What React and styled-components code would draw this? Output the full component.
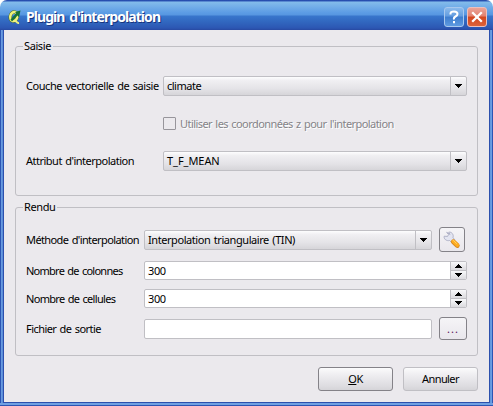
import React from 'react';
import styled, { createGlobalStyle, css } from 'styled-components';

const GlobalStyle = createGlobalStyle`
  * { box-sizing: border-box; }
  body { margin: 0; background: #fff; overflow: hidden; }
`;

const Window = styled.div`
  width: 493px;
  height: 406px;
  display: flex;
  flex-direction: column;
  padding: 0 4px 4px;
  border-radius: 7px 7px 0 0;
  background:
    linear-gradient(#2c50ad, #2c50ad) 3px 30px / 1px 373px no-repeat,
    linear-gradient(#2c50ad, #2c50ad) 489px 30px / 1px 373px no-repeat,
    linear-gradient(#2c50ad, #2c50ad) 3px 402px / 487px 1px no-repeat,
    linear-gradient(90deg, #2c55b4 1px, #6fa0e2 1px, #5587d5 3px, transparent 3px, transparent 490px, #5f95dd 490px, #6fa0e2 492px, #2c55b4 492px) 0 30px / 493px 373px no-repeat,
    linear-gradient(#6fa0e2 0 2px, #2c55b4 2px) 0 403px / 493px 3px no-repeat,
    linear-gradient(#1f45a5 0, #2f58b8 1px, #83bcea 2px, #79b3e9 5px, #5b9be4 13px, #5796e0 15px, #3876cc 16px, #336cc3 20px, #2c57b3 28px, #2849a2 30px);
  font-family: 'Noto Sans', 'Open Sans', sans-serif;
  font-size: 11px;
  line-height: 14px;
  color: #000;
`;

const TitleBar = styled.header`
  height: 30px;
  flex: none;
  display: flex;
  align-items: center;
  padding: 4px 2px 0 4px;
`;

const Title = styled.h1`
  flex: 1;
  margin: 0 0 0 4px;
  font-size: 14px;
  line-height: 18px;
  font-weight: 700;
  letter-spacing: -0.93px;
  word-spacing: 2px;
  color: #fff;
  text-shadow: 1px 1px 0 #17357f;
  white-space: nowrap;
`;

const CaptionButton = styled.button`
  width: 20px;
  height: 20px;
  padding: 0;
  margin-left: 3px;
  display: grid;
  place-items: center;
  border: 1px solid ${p => (p.$danger ? '#ecc0bd' : '#a8c8ee')};
  border-radius: 3px;
  background: ${p => p.$danger
    ? 'linear-gradient(#eba397, #e28270 45%, #d3471f 50%, #dc6239)'
    : 'linear-gradient(#8ab9eb, #639de0 45%, #3e7dce 50%, #5e9ae0)'};
`;

const Body = styled.main`
  flex: 1;
  background: #ebe9ed;
  padding: 16px 11px 0;
`;

const Group = styled.section`
  position: relative;
  height: ${p => p.$height}px;
  margin-bottom: 11px;
  border: 1px solid #c0bfc4;
  border-radius: 3px;
  padding: ${p => p.$top}px 10px 0;
`;

const Legend = styled.h2`
  position: absolute;
  left: 7px;
  top: -8px;
  margin: 0;
  padding: 0 2px 0 1px;
  background: #ebe9ed;
  font-size: 11px;
  line-height: 14px;
  font-weight: 400;
  letter-spacing: ${p => p.$track ?? -0.4}px;
`;

const Row = styled.div`
  display: flex;
  align-items: center;
  height: ${p => p.$height}px;
  margin-bottom: ${p => p.$gap || 0}px;
`;

const Label = styled.label`
  width: ${p => p.$width}px;
  flex: none;
  white-space: nowrap;
  letter-spacing: ${p => p.$track ?? -0.5}px;
  word-spacing: 1px;
`;

const Value = styled.span`
  flex: 1;
  padding-left: 3px;
  white-space: nowrap;
  letter-spacing: ${p => p.$track ?? -0.43}px;
  word-spacing: 1px;
`;

const field = css`
  display: flex;
  align-items: stretch;
  width: ${p => p.$width}px;
  border: 1px solid #c0bfc4;
  border-radius: 2px;
  overflow: hidden;
`;

const Combo = styled.div`
  ${field}
  height: 20px;
  line-height: 18px;
  background: linear-gradient(#fdfdfe, #f0eff2 20%, #e4e3e7 65%, #d6d5d9);
`;

const ComboArrow = styled.span`
  width: 16px;
  border-left: 1px solid #c0bfc4;
  display: grid;
  place-items: center;
`;

const TextBox = styled.div`
  ${field}
  height: ${p => p.$height || 19}px;
  line-height: 17px;
  background: #fff;
`;

const Stepper = styled.div`
  width: 16px;
  display: grid;
  grid-template-rows: 8px 9px;
  border-left: 1px solid #c0bfc4;
`;

const Step = styled.span`
  display: grid;
  place-items: center;
  background: linear-gradient(#f8f8fa, #dcdbdf);
  & + & { border-top: 1px solid #c0bfc4; }
`;

const CheckBox = styled.span`
  width: 13px;
  height: 13px;
  margin-right: 4px;
  border: 1px solid #97959b;
  border-radius: 1px;
`;

const Disabled = styled(Label)`
  color: #858488;
  text-shadow: 1px 1px 0 #fff;
`;

const Button = styled.button`
  width: ${p => p.$width}px;
  height: ${p => p.$height}px;
  flex: none;
  margin: 0 0 0 ${p => p.$left || 0}px;
  padding: 0;
  display: flex;
  align-items: center;
  justify-content: center;
  border: 1px solid ${p => (p.$strong ? '#848288' : '#c0bfc4')};
  border-radius: 3px;
  background: ${p => p.$flat
    ? 'linear-gradient(#f5f4f7, #e9e7ec)'
    : 'linear-gradient(#fbfbfc, #efeef1 30%, #dedde1 80%, #d5d4d8)'};
  font: inherit;
  color: ${p => p.$ink || '#000'};
  letter-spacing: ${p => p.$track || 0}px;
`;

const Footer = styled.footer`
  display: flex;
  justify-content: flex-end;
`;

function Triangle({ up }) {
  return (
    <svg width="7" height="4" viewBox="0 0 7 4" shapeRendering="crispEdges">
      <path d={up ? 'M3 0h1v1h1v1h1v1h1v1H0V3h1V2h1V1h1z' : 'M0 0h7v1H6v1H5v1H4v1H3V3H2V2H1V1H0z'} />
    </svg>
  );
}

function QgisLogo() {
  return (
    <svg width="14" height="16" viewBox="0 0 14 16">
      <ellipse cx="5.800" cy="7.500" rx="3.500" ry="4.600" transform="rotate(15 5.800 7.500)" fill="none" stroke="#4d6f25" strokeWidth="3.400" />
      <ellipse cx="5.800" cy="7.500" rx="3.500" ry="4.600" transform="rotate(15 5.800 7.500)" fill="none" stroke="#f0f27c" strokeWidth="2.500" />
      <path d="M5.500 11.800q2-.5 3 1T11 14" fill="none" stroke="#f0f27c" strokeWidth="2" />
      <path d="m2.500 10.500 1.500 2 5.500-6 1.500 1.800L12.500 1.500 7 3l1.200 1.300z" fill="#187236" />
    </svg>
  );
}

function Wrench() {
  return (
    <svg width="18" height="18" viewBox="0 0 18 18">
      <path d="M3.700 1.300 5.500 3.600 4.600 5.400 1.200 5.200C.5 8 3.500 10.300 6.600 9.500L9 12l3-3-2-2.300C11 3.500 8.500.5 5.700 1.200L7 3.500z" fill="#e3e5f1" stroke="#a9abc2" strokeWidth=".9" strokeLinejoin="round" />
      <path d="m10.300 10.700 4 3.800" stroke="#d98a24" strokeWidth="4.800" strokeLinecap="round" />
      <path d="m10.300 10.300 4 3.800" stroke="#ffae20" strokeWidth="3.500" strokeLinecap="round" />
      <path d="m10.500 9.500 3 3" stroke="#ffd06a" strokeWidth="1" strokeLinecap="round" />
    </svg>
  );
}

function Select({ width, value, track }) {
  return (
    <Combo $width={width}>
      <Value $track={track}>{value}</Value>
      <ComboArrow><Triangle /></ComboArrow>
    </Combo>
  );
}

function SpinBox({ value }) {
  return (
    <TextBox $width={323}>
      <Value $track={-0.4}>{value}</Value>
      <Stepper><Step><Triangle up /></Step><Step><Triangle /></Step></Stepper>
    </TextBox>
  );
}

export default function App() {
  return (
    <>
      <GlobalStyle />
      <Window>
        <TitleBar>
          <QgisLogo />
          <Title>Plugin d'interpolation</Title>
          <CaptionButton aria-label="Aide">
            <svg width="12" height="14" viewBox="0 0 12 14"><path d="M2.500 4.500V3.500Q2.500 1.500 6 1.500T9.500 4Q9.500 5.500 7.500 6.500T6 9.500M6 11v2.300" fill="none" stroke="#fff" strokeWidth="2" /></svg>
          </CaptionButton>
          <CaptionButton $danger aria-label="Fermer">
            <svg width="12" height="12" viewBox="0 0 12 12"><path d="m1.200 1.200 9.600 9.600M10.800 1.200l-9.600 9.600" stroke="#fff" strokeWidth="2.300" /></svg>
          </CaptionButton>
        </TitleBar>
        <Body>
          <Group $height={150} $top={29}>
            <Legend>Saisie</Legend>
            <Row $height={20} $gap={21}>
              <Label $width={137} $track={-0.44}>Couche vectorielle de saisie</Label>
              <Select width={305} value="climate" track={-0.5} />
            </Row>
            <Row $height={13} $gap={21}>
              <Label $width={137} />
              <CheckBox />
              <Disabled $track={-0.56}>Utiliser les coordonnées z pour l'interpolation</Disabled>
            </Row>
            <Row $height={20}>
              <Label $width={137}>Attribut d'interpolation</Label>
              <Select width={305} value="T_F_MEAN" track={-0.05} />
            </Row>
          </Group>
          <Group $height={149} $top={19}>
            <Legend>Rendu</Legend>
            <Row $height={25} $gap={9}>
              <Label $width={118} $track={-0.6}>Méthode d'interpolation</Label>
              <Select width={288} value="Interpolation triangulaire (TIN)" />
              <Button $width={26} $height={25} $left={7} $strong $flat aria-label="Configurer"><Wrench /></Button>
            </Row>
            <Row $height={19} $gap={9}>
              <Label $width={118} $track={-0.74}>Nombre de colonnes</Label>
              <SpinBox value="300" />
            </Row>
            <Row $height={19} $gap={9}>
              <Label $width={118} $track={-0.68}>Nombre de cellules</Label>
              <SpinBox value="300" />
            </Row>
            <Row $height={23}>
              <Label $width={118} $track={-0.56}>Fichier de sortie</Label>
              <TextBox $width={288} $height={20} />
              <Button $width={28} $height={23} $left={7} $strong $flat $ink="#5a1458" $track={1}>...</Button>
            </Row>
          </Group>
          <Footer>
            <Button $width={75} $height={24} $strong $track={-0.4}><u>O</u>K</Button>
            <Button $width={75} $height={24} $left={10} $track={-0.6}>Annuler</Button>
          </Footer>
        </Body>
      </Window>
    </>
  );
}
